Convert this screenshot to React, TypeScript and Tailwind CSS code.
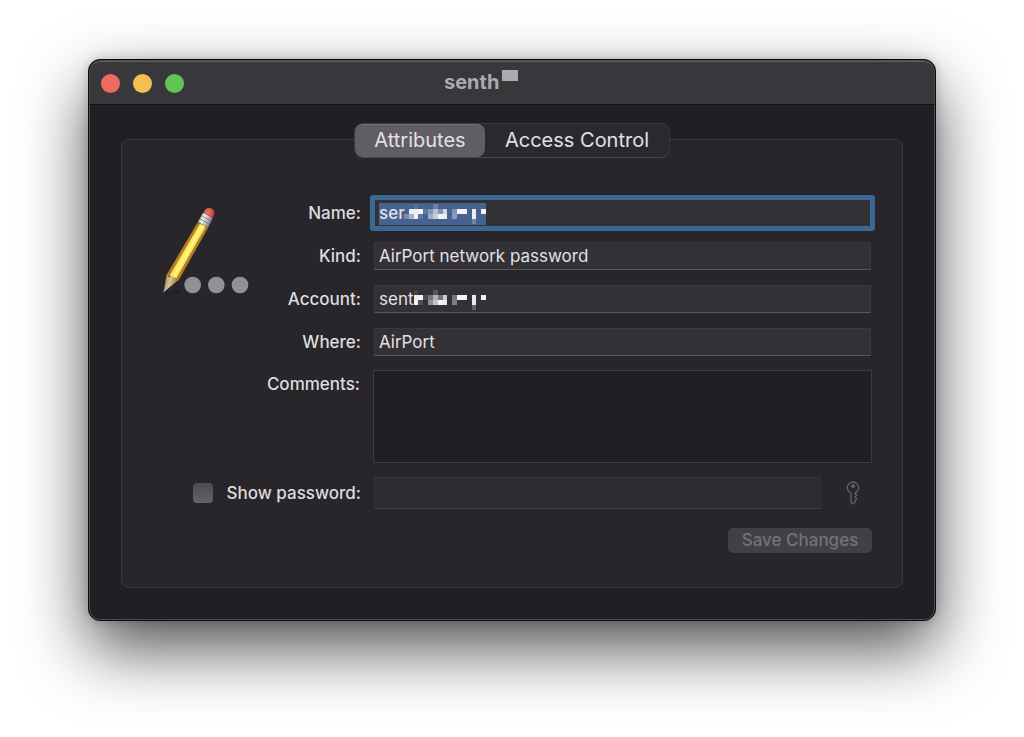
import React from "react";

const blocks = [
  { x: 0, y: 2, o: 0.3 },
  { x: 1, y: 1, o: 0.95 },
  { x: 1, y: 2, o: 0.55 },
  { x: 2, y: 1, o: 0.95 },
  { x: 2, y: 2, o: 1 },
  { x: 2, y: 0, o: 0.1 },
  { x: 3, y: 1, o: 1 },
  { x: 3, y: 2, o: 0.15 },
  { x: 4, y: 1, o: 0.15 },
  { x: 5, y: 1, o: 0.35 },
  { x: 5, y: 2, o: 0.5 },
  { x: 6, y: 0, o: 0.2 },
  { x: 6, y: 1, o: 0.65 },
  { x: 6, y: 2, o: 0.75 },
  { x: 7, y: 1, o: 0.35 },
  { x: 7, y: 2, o: 1 },
  { x: 8, y: 1, o: 0.8 },
  { x: 8, y: 2, o: 0.95 },
  { x: 10, y: 1, o: 0.35 },
  { x: 10, y: 2, o: 0.4 },
  { x: 11, y: 1, o: 1 },
  { x: 12, y: 1, o: 1 },
  { x: 14, y: 1, o: 0.95 },
  { x: 14, y: 2, o: 0.95 },
  { x: 14, y: 3, o: 0.25 },
  { x: 16, y: 1, o: 1 },
];

function Redacted({ skip = 0 }: { skip?: number }) {
  return (
    <svg
      className="absolute left-[30px] top-[5px] pointer-events-none"
      width="82"
      height="20"
      viewBox="0 0 17 4"
      preserveAspectRatio="none"
      shapeRendering="crispEdges"
      aria-hidden="true"
    >
      {blocks
        .filter((b) => b.x >= skip)
        .map((b, idx) => (
          <rect key={idx} x={b.x} y={b.y} width="1" height="1" fill="#f4f4f6" opacity={b.o} />
        ))}
    </svg>
  );
}

function PencilIcon() {
  return (
    <svg width="86" height="90" viewBox="38 30 258 270" aria-hidden="true">
      <defs>
        <linearGradient id="ferrule" x1="0" y1="0" x2="1" y2="0.5">
          <stop offset="0" stopColor="#77777b" />
          <stop offset="0.45" stopColor="#f0f0f0" />
          <stop offset="1" stopColor="#77777b" />
        </linearGradient>
        <radialGradient id="eraser" cx="0.4" cy="0.35" r="0.7">
          <stop offset="0" stopColor="#f0776a" />
          <stop offset="1" stopColor="#b93229" />
        </radialGradient>
        <linearGradient id="wood" x1="0" y1="0" x2="1" y2="0.4">
          <stop offset="0" stopColor="#8d7241" />
          <stop offset="0.5" stopColor="#dcc491" />
          <stop offset="1" stopColor="#8b6c3b" />
        </linearGradient>
      </defs>
      <path d="M42 291 L84 284 L92 296 L48 298 Z" fill="#17151a" opacity="0.3" />
      <path d="M160 54 C162 42 172 37 182 40 C192 44 195 54 189 65 L185 71 Z" fill="url(#eraser)" />
      <path d="M158 53 L187 70 L173 98 L143 81 Z" fill="url(#ferrule)" />
      <path d="M154 62 L183 79 M149 71 L178 88" stroke="#66666a" strokeWidth="2" />
      <path d="M142 82 L173 99 L84 257 L49 239 Z" fill="#b57c22" />
      <path d="M149 86 L166 95 L78 250 L58 242 Z" fill="#fbe95c" />
      <path d="M154 89 L160 92 L73 247 L67 244 Z" fill="#fff584" />
      <path d="M49 238 L57 246 L66 243 L75 252 L84 256 L44 288 L42 280 Z" fill="url(#wood)" />
      <path d="M42 280 L48 284 L39 294 Z" fill="#a5a5a8" />
      <circle cx="127" cy="270" r="25" fill="#929096" />
      <circle cx="198" cy="270" r="25" fill="#929096" />
      <circle cx="269" cy="270" r="25" fill="#929096" />
    </svg>
  );
}

function KeyIcon() {
  return (
    <svg width="14" height="24" viewBox="0 0 42 72" fill="none" stroke="#626065" strokeWidth="4" strokeLinejoin="round" aria-hidden="true">
      <path d="M15 36 A17 17 0 1 1 27 36 V38 L32 43 L27 48 L32 54 L27 59 V64 L21 69 L15 64 Z" />
      <circle cx="21" cy="15" r="4" fill="#626065" />
    </svg>
  );
}

const inputClass =
  "block relative w-full h-7 px-1 bg-transparent border text-[17px] text-[#e2e1e3] outline-none";

const borderClass = "border-[#3b393e] border-b-[#59575c]";

const labelClass = "shrink-0 text-right pt-0.5 pr-[13px] text-[17px] font-medium text-[#dddcde]";

export default function KeychainItem() {
  return (
    <div className="min-h-screen bg-white px-[88px] pt-[59px] pb-[117px] font-['Inter','Liberation_Sans',sans-serif]">
      <main className="rounded-xl overflow-hidden border border-[#0d0c0f] bg-[#211e25] shadow-[0_28px_66px_rgba(0,0,0,0.68),0_0_12px_rgba(0,0,0,0.2)]">
        <div className="rounded-[11px] border border-[#4b494e]">
          <header className="grid grid-cols-[1fr_auto_1fr] items-center h-11 px-[11px] rounded-t-[10px] bg-[#38373b] border-t border-t-[#626166] border-b border-b-[#121014]">
            <div className="flex gap-[13px]">
              <button aria-label="Close" className="size-[19px] rounded-full bg-[#ed6a5f]" />
              <button aria-label="Minimize" className="size-[19px] rounded-full bg-[#f5bf4f]" />
              <button aria-label="Zoom" className="size-[19px] rounded-full bg-[#61c555]" />
            </div>
            <h1 className="flex items-start w-[136px] pb-0.5 text-[20px] leading-6 font-bold text-[#acaaaf]">
              senth
              <span className="ml-[3px] w-4 h-[11px] bg-[#acaaaf]" />
            </h1>
          </header>

          <div className="px-[31px] pt-[18px] pb-[31px]">
            <div role="tablist" className="relative z-10 flex w-fit mx-auto h-[35px] rounded-[9px] border border-[#3b393f] border-b-[#4a484d] bg-[#2b292f] text-[20px] text-[#e2e1e3]">
              <button role="tab" aria-selected="true" className="w-[130px] pb-[3px] rounded-[8px] bg-[#605e64] border-t border-t-[#747278]">
                Attributes
              </button>
              <button role="tab" aria-selected="false" className="w-[184px] pb-0.5">
                Access Control
              </button>
            </div>

            <form className="-mt-[19px] pt-[59px] pr-[31px] pb-[34px] rounded-lg border border-[#3b393f] bg-[#28252b]">
              <div className="flex">
                <div className="shrink-0 w-[130px] pl-[41px] pt-[6px]">
                  <PencilIcon />
                </div>
                <div className="flex-1 flex flex-col gap-[15px]">
                  <div className="flex items-center">
                    <label htmlFor="name" className={`w-[122px] ${labelClass}`}>Name:</label>
                    <div className="relative flex-1 bg-[#333036] rounded-[1px] ring-4 ring-[#3b6893]">
                      <span className="absolute left-[5px] top-1 w-[107px] h-[22px] bg-[#466290]" />
                      <input id="name" type="text" defaultValue="ser" className={`${inputClass} border-[#3b6893] font-medium`} />
                      <Redacted />
                    </div>
                  </div>
                  <div className="flex items-center">
                    <label htmlFor="kind" className={`w-[122px] ${labelClass}`}>Kind:</label>
                    <div className="flex-1 bg-[#333036]">
                      <input id="kind" type="text" readOnly defaultValue="AirPort network password" className={`${inputClass} ${borderClass}`} />
                    </div>
                  </div>
                  <div className="flex items-center">
                    <label htmlFor="account" className={`w-[122px] ${labelClass}`}>Account:</label>
                    <div className="relative flex-1 bg-[#333036]">
                      <input id="account" type="text" defaultValue="sent" className={`${inputClass} ${borderClass}`} />
                      <Redacted skip={2} />
                    </div>
                  </div>
                  <div className="flex items-center">
                    <label htmlFor="where" className={`w-[122px] ${labelClass}`}>Where:</label>
                    <div className="flex-1 bg-[#333036]">
                      <input id="where" type="text" defaultValue="AirPort" className={`${inputClass} ${borderClass}`} />
                    </div>
                  </div>
                </div>
              </div>

              <div className="flex mt-[14px] -mr-px">
                <label htmlFor="comments" className={`w-[251px] ${labelClass}`}>Comments:</label>
                <textarea id="comments" className="flex-1 h-[93px] resize-none border border-[#3d3b40] bg-[#211e24] text-[17px] text-[#e2e1e3] outline-none" />
              </div>

              <div className="flex items-center mt-[14px]">
                <div className="shrink-0 w-[252px] flex items-center pl-[71px]">
                  <input id="show" type="checkbox" className="appearance-none size-5 rounded-[4px] bg-linear-to-b from-[#4e4c51] to-[#65636a]" />
                  <label htmlFor="show" className={`flex-1 ${labelClass}`}>Show password:</label>
                </div>
                <input type="password" aria-label="Password" className="flex-1 min-w-0 h-8 px-1 border border-[#353338] border-b-[#424045] bg-[#2d2a30] text-[#e2e1e3] outline-none" />
                <button type="button" aria-label="Generate password" className="ml-[25px] mr-[11px]">
                  <KeyIcon />
                </button>
              </div>

              <div className="flex justify-end mt-[19px] -mr-px">
                <button type="button" disabled className="w-36 h-[25px] pb-0.5 rounded-[5px] bg-[#424045] text-[17px] leading-6 font-medium text-[#747277]">
                  Save Changes
                </button>
              </div>
            </form>
          </div>
        </div>
      </main>
    </div>
  );
}
